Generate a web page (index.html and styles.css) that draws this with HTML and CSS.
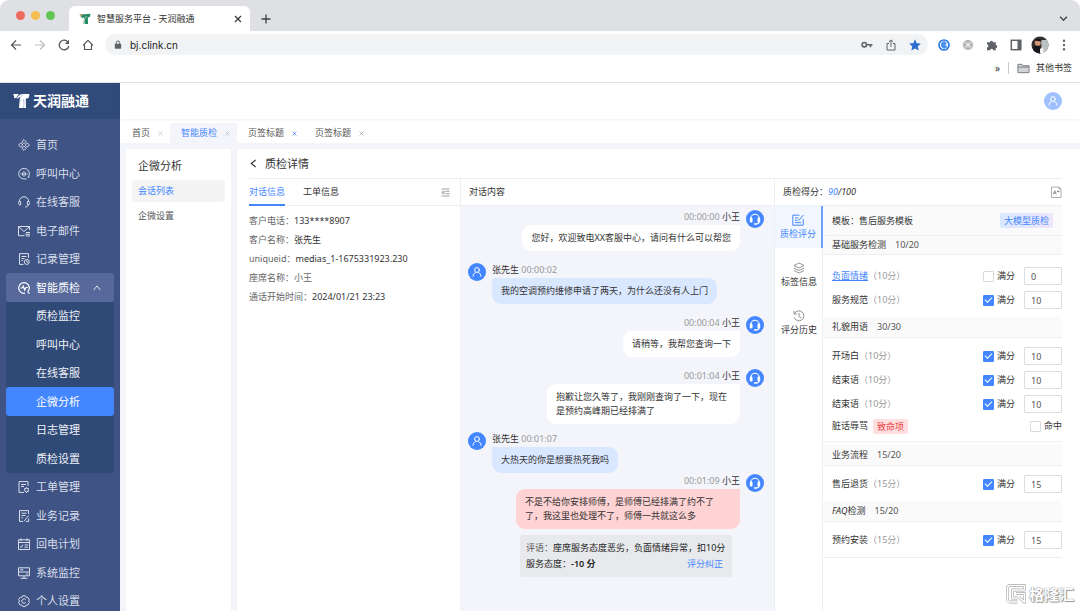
FILE: index.html
```html
<!DOCTYPE html>
<html lang="zh-CN">
<head>
<meta charset="utf-8">
<title>智慧服务平台 - 天润融通</title>
<link rel="stylesheet" href="styles.css">
</head>
<body>
<svg class="defs" aria-hidden="true">
  <symbol id="user" viewBox="0 0 18 18"><g fill="none" stroke="#fff" stroke-width="1" stroke-linecap="round"><circle cx="9" cy="7" r="2.400"/><path d="M5 13.300c.2-1.800 1-3 2.400-3.800M13 13.300c-.2-1.800-1-3-2.400-3.800"/></g></symbol>
  <symbol id="agent" viewBox="0 0 18 18"><path d="M4.800 8.500a4.200 4.200 0 0 1 8.400 0v3c0 1.500-1 2.300-2.700 2.500" fill="none" stroke="#fff" stroke-width="1.100"/><rect x="3.800" y="7.500" width="2.700" height="5" rx="1.200" fill="#fff"/><rect x="11.500" y="7.500" width="2.700" height="5" rx="1.200" fill="#fff"/><rect x="7.800" y="13.200" width="3.400" height="1.500" rx=".7" fill="#fff"/></symbol>
  <symbol id="close" viewBox="0 0 8 8"><path d="M1 1l6 6M7 1l-6 6" fill="none" stroke="currentColor" stroke-width="1.200"/></symbol>
</svg>

<header class="browser">
  <div class="tabstrip">
    <div class="lights"><i class="red"></i><i class="yellow"></i><i class="green"></i></div>
    <div class="browser-tab">
      <svg class="fav" viewBox="0 0 12 12"><path d="M.5 1h4L3.800 3.800 1.500 4z" fill="#b9a978"/><path d="M3.500 1.500 11.500.8 10.800 4l-2 .2L9 11H4.500L5 4.500 2 5z" fill="#1f8a63"/><path d="M5.500 11c-.5-3 0-6 2-8" fill="none" stroke="#d8e8df" stroke-width=".8"/></svg>
      <span>智慧服务平台 - 天润融通</span>
      <button class="plain" aria-label="关闭标签页"><svg class="s7" viewBox="0 0 8 8"><path d="M1 1l6 6M7 1 1 7" stroke="#3c4043" stroke-width="1.400"/></svg></button>
    </div>
    <button class="plain new-tab" aria-label="新标签页"><svg class="s10" viewBox="0 0 10 10"><path d="M5 .5v9M.5 5h9" stroke="#3c4043" stroke-width="1.300"/></svg></button>
    <svg class="s9 chev" viewBox="0 0 8 8"><path d="M1 2.500l3 3 3-3" fill="none" stroke="#45484c" stroke-width="1.300"/></svg>
  </div>
  <div class="toolbar">
    <div class="nav-buttons">
      <button class="plain" aria-label="后退"><svg class="s12" viewBox="0 0 12 12"><path d="M11 6H1.500M6 1.500 1.500 6 6 10.500" fill="none" stroke="#55585c" stroke-width="1.200"/></svg></button>
      <button class="plain" aria-label="前进"><svg class="s12" viewBox="0 0 12 12"><path d="M1 6h9.500M6 1.500 10.500 6 6 10.500" fill="none" stroke="#bbbdc0" stroke-width="1.200"/></svg></button>
      <button class="plain" aria-label="刷新"><svg class="s12" viewBox="0 0 12 12"><path d="M10.200 3.500A4.800 4.800 0 1 0 10.800 7" fill="none" stroke="#55585c" stroke-width="1.300"/><path d="M11 .8V5H6.800z" fill="#55585c"/></svg></button>
      <button class="plain" aria-label="主页"><svg class="s12" viewBox="0 0 12 12"><path d="M1 6.300 6 1.300l5 5M2.500 5.500v5h7v-5" fill="none" stroke="#55585c" stroke-width="1.200"/></svg></button>
    </div>
    <div class="address">
      <svg class="lock" viewBox="0 0 8 10"><rect x=".8" y="3.800" width="6.400" height="5" rx=".8" fill="#5f6368"/><path d="M2.300 4V2.700a1.700 1.700 0 0 1 3.400 0V4" fill="none" stroke="#5f6368"/></svg>
      <input class="url" type="text" value="bj.clink.cn" aria-label="网址">
      <svg class="s12" viewBox="0 0 12 12"><circle cx="3.300" cy="5.700" r="2.200" fill="none" stroke="#5f6368" stroke-width="1.600"/><path d="M5.500 5.700h6M9.500 5.700V8.200" stroke="#5f6368" stroke-width="1.600"/></svg>
      <svg class="s12" viewBox="0 0 12 12"><path d="M4 4.500H2v6.500h8V4.500H8M6 7.800V1M3.800 3 6 .9 8.200 3" fill="none" stroke="#5f6368"/></svg>
      <svg class="s12" viewBox="0 0 12 12"><path d="M6 .3l1.700 3.900 4.200.4-3.200 2.800 1 4.200L6 9.400l-3.700 2.200 1-4.200L.1 4.600l4.200-.4z" fill="#2b6bd0"/></svg>
    </div>
    <div class="extensions">
      <svg class="s12" viewBox="0 0 12 12"><circle cx="6" cy="6" r="5" fill="#fff" stroke="#2f7be8" stroke-width="1.700"/><path d="M6.500 2C4 2.500 2.800 4 3 6.500c.3 2 1.800 3 3.600 3.200L9.600 8 8.500 6.500H6.800L9 4.500z" fill="#4c91ee"/></svg>
      <svg class="s12" viewBox="0 0 12 12"><circle cx="6" cy="6" r="5" fill="#a9abad"/><path d="M4.200 1.800v8.400M7.800 1.800v8.400M1.800 4.200h8.400M1.800 7.800h8.400" stroke="#e5e5e6" stroke-width=".8"/><circle cx="6" cy="6" r="1.200" fill="#f4f4f4"/></svg>
      <svg class="s12" viewBox="0 0 12 12"><path d="M1 3.200h3a1.500 1.500 0 1 1 3 0h2.800V6a1.500 1.500 0 1 1 0 3v2.300H7.200a1.500 1.500 0 1 0-3 0H1V8.400a1.400 1.400 0 1 0 0-2.800z" fill="#5f6368"/></svg>
      <svg class="s12" viewBox="0 0 12 12"><rect x="1.300" y="1.300" width="9.400" height="9.400" fill="none" stroke="#5f6368" stroke-width="1.500"/><path d="M7.500 1h3.700v10H7.500z" fill="#5f6368"/></svg>
      <svg class="face" viewBox="0 0 18 18"><clipPath id="round"><circle cx="9" cy="9" r="8.500"/></clipPath><g clip-path="url(#round)"><path d="M0 0h18v18H0z" fill="#34302f"/><path d="M10 4l8 0v14h-7z" fill="#b9c1c2"/><circle cx="6.800" cy="6.800" r="3" fill="#d49a78"/><path d="M2 11c2-1 4-1.500 7 0l1 7H2z" fill="#15171a"/><path d="M9 13l3-2 1 7H9z" fill="#f5f5f2"/><path d="M4 4.500c2-3 6-2 7 1L6 5z" fill="#181515"/></g></svg>
      <svg class="s12" viewBox="0 0 12 12"><g fill="#5f6368"><circle cx="6" cy="1.800" r="1.200"/><circle cx="6" cy="6" r="1.200"/><circle cx="6" cy="10.200" r="1.200"/></g></svg>
    </div>
  </div>
  <div class="bookmarks">
    <span class="more">»</span><span class="rule"></span>
    <svg class="folder" viewBox="0 0 14 11"><path d="M1 1h4.500l1 1.500H13V10H1z" fill="#d2d4d6" stroke="#75787c"/><path d="M1 4h12" stroke="#75787c"/></svg>
    <span>其他书签</span>
  </div>
</header>

<div class="app">
  <aside class="sidebar">
    <div class="brand">
      <svg class="logo" viewBox="0 0 17 16"><path d="M.3 1h5.500L4 3.500 3.300 5 1.500 5.200z" fill="#fff"/><path d="M3.500 6C5 2.500 7 1.200 10 1h6.500l-1 4.300-2.700.3L13 15H6l.7-8.500L7 4z" fill="#fff"/><path d="M9.800 1.500C7.500 3.500 6.500 6 6.800 9M10.500 6c.6 3 .6 6 0 9" fill="none" stroke="#7184a8" stroke-width=".5"/></svg>
      <span>天润融通</span>
    </div>
    <nav>
      <ul class="menu">
        <li><a href="#"><svg viewBox="0 0 12 12"><path d="M6 .6 8.100 2.700 6 4.800 3.900 2.700zM6 7.200l2.100 2.100L6 11.400 3.900 9.300zM2.700 3.900 4.800 6 2.700 8.100.6 6zM9.300 3.900 11.400 6 9.300 8.100 7.200 6z"/></svg>首页</a></li>
        <li><a href="#"><svg viewBox="0 0 12 12"><path d="M8.500 11H6A5.300 5.300 0 1 1 11.300 6c0 1.500-.3 2.500-1 3.300M4.500 4.500v3M6 3.200v5.600M7.500 4.500v3M3 5.500v1M9 5.500v1M9.700 9.200h1.600"/></svg>呼叫中心</a></li>
        <li><a href="#"><svg viewBox="0 0 12 12"><path d="M1.300 5.500A4.700 4.700 0 0 1 10.700 5.500M10.700 8.500c-.4 1.600-1.700 2.500-3.700 2.500M1 5.500h1.600V9H1.500C.3 8 .3 6.500 1 5.500zM11 5.500H9.400V9h1.100c1.200-1 1.200-2.500.5-3.500z"/></svg>在线客服</a></li>
        <li><a href="#"><svg viewBox="0 0 12 12"><path d="M11.500 5V1.500H.5v9.200h6M.5 1.500 6 6.500l5.500-5M8 7.500h4M7 9.200h5M8 10.900h4"/></svg>电子邮件</a></li>
        <li><a href="#"><svg viewBox="0 0 12 12"><path d="M10.500 5V.6h-9v10.800h4M3.500 3.500h5M3.500 5.500h3M3.500 7.500h1.500"/><circle cx="8.800" cy="8.900" r="2.500"/><path d="M8.800 7.300V9h1.500"/></svg>记录管理</a></li>
        <li><a href="#" class="open"><svg viewBox="0 0 12 12"><path d="M9.700 9.800A5.300 5.300 0 1 0 7 11.200M9.700 9.800l1.800 1.800M2.500 6H4l1.200-2 1.500 4L8 5.500h1.700" stroke-width="1.200"/></svg>智能质检<svg class="caret" viewBox="0 0 12 12"><path d="M2 8.500l4-5 4 5"/></svg></a></li>
      </ul>
      <ul class="submenu">
        <li><a href="#">质检监控</a></li>
        <li><a href="#">呼叫中心</a></li>
        <li><a href="#">在线客服</a></li>
        <li><a href="#" class="current">企微分析</a></li>
        <li><a href="#">日志管理</a></li>
        <li><a href="#">质检设置</a></li>
      </ul>
      <ul class="menu">
        <li><a href="#"><svg viewBox="0 0 12 12"><path d="M10 5V.6H1v10.800h5M3 3.500h5M3 5.500h3"/><circle cx="8.500" cy="9" r="1.900"/><path d="M8.500 6.200v1M8.500 11v1M6 7.600l.9.500M10.100 9.900l.9.500M11 7.600l-.9.500"/></svg>工单管理</a></li>
        <li><a href="#"><svg viewBox="0 0 12 12"><path d="M10.500 4V.6h-9v10.800H5M3.500 3.200h5M3.500 5.500h4M3.500 7.800H5M6 11.200l4.700-5.700M8 11.400h2.700V8.500"/></svg>业务记录</a></li>
        <li><a href="#"><svg viewBox="0 0 12 12"><path d="M.5 1.800h11v9.700H.5zM.5 4.500h11M3 .3v2.800M9 .3v2.800M6.500 7H10M6.500 9.200H10M2 8.500l1.200 1 1.800-2.800"/></svg>回电计划</a></li>
        <li><a href="#"><svg viewBox="0 0 12 12"><path d="M.5.800h11v8H.5zM.5 5h11M6 9v2.300M2.500 11.300h7M2 3h1.500l.7-1L5 3.500M8 7h2"/></svg>系统监控</a></li>
        <li><a href="#"><svg viewBox="0 0 12 12"><path d="M4.500 .8h3l.7 1.500 1.700.1 1.500 2.600-.9 1 .9 1.500-1.500 2.500-1.700.1-.7 1.300h-3l-.7-1.300-1.700-.1L.6 7.500 1.500 6 .6 4.500l1.500-2.100 1.700-.1zM7.800 4.800A2.200 2.200 0 1 0 7.800 7.300"/></svg>个人设置</a></li>
      </ul>
    </nav>
  </aside>

  <div class="workspace">
    <div class="topbar"><svg class="account" viewBox="0 0 18 18"><circle cx="9" cy="9" r="9" fill="#9ec0ff"/><use href="#user"/></svg></div>
    <div class="page-tabs">
      <div class="page-tab"><span>首页</span><svg class="x"><use href="#close"/></svg></div>
      <div class="page-tab selected"><span>智能质检</span><svg class="x"><use href="#close"/></svg></div>
      <div class="page-tab"><span>页签标题</span><svg class="x blue"><use href="#close"/></svg></div>
      <div class="page-tab"><span>页签标题</span><svg class="x dark"><use href="#close"/></svg></div>
    </div>
    <div class="panels">
      <nav class="side-panel">
        <h2>企微分析</h2>
        <a href="#" class="chosen">会话列表</a>
        <a href="#">企微设置</a>
      </nav>
      <main class="detail">
        <div class="title"><svg class="s9" viewBox="0 0 8 8"><path d="M6 .8 2 4l4 3.200" fill="none" stroke="#333"/></svg><h1>质检详情</h1></div>
        <div class="columns">
          <section class="info">
            <div class="col-head tabs">
              <button class="plain active">对话信息</button><button class="plain">工单信息</button>
              <svg class="s9 push" viewBox="0 0 9 9"><path d="M.5 1h8M4.500 3.300h4M4.500 5.700h4M.5 8h8M3 3v3L.8 4.500z" fill="none" stroke="#888" stroke-width=".8"/></svg>
            </div>
            <dl>
              <div><dt>客户电话<span class="mid">：</span></dt><dd>133****8907</dd></div>
              <div><dt>客户名称<span class="mid">：</span></dt><dd>张先生</dd></div>
              <div><dt>uniqueid<span class="mid">：</span></dt><dd>medias_1-1675331923.230</dd></div>
              <div><dt>座席名称<span class="mid">：</span></dt><dd class="soft">小王</dd></div>
              <div><dt>通话开始时间<span class="mid">：</span></dt><dd>2024/01/21 23:23</dd></div>
            </dl>
          </section>

          <section class="chat">
            <div class="col-head">对话内容</div>
            <div class="messages">
              <article class="msg agent"><div><p class="who"><time>00:00:00</time> 小王</p><p class="bubble">您好，欢迎致电XX客服中心，请问有什么可以帮您</p></div><svg class="avatar"><use href="#agent"/></svg></article>
              <article class="msg"><svg class="avatar"><use href="#user"/></svg><div><p class="who">张先生 <time>00:00:02</time></p><p class="bubble">我的空调预约维修申请了两天<span class="mid">，</span>为什么还没有人上门</p></div></article>
              <article class="msg agent"><div><p class="who"><time>00:00:04</time> 小王</p><p class="bubble">请稍等，我帮您查询一下</p></div><svg class="avatar"><use href="#agent"/></svg></article>
              <article class="msg agent long"><div><p class="who"><time>00:01:04</time> 小王</p><p class="bubble">抱歉让您久等了，我刚刚查询了一下，现在<br>是预约高峰期已经排满了</p></div><svg class="avatar"><use href="#agent"/></svg></article>
              <article class="msg near"><svg class="avatar"><use href="#user"/></svg><div><p class="who">张先生 <time>00:01:07</time></p><p class="bubble">大热天的你是想要热死我吗</p></div></article>
              <article class="msg agent flagged"><div><p class="who"><time>00:01:09</time> 小王</p><p class="bubble">不是不给你安排师傅，是师傅已经排满了约不了<br>了，我这里也处理不了，师傅一共就这么多</p></div><svg class="avatar"><use href="#agent"/></svg></article>
              <aside class="remark">
                <p><span class="label">评语：</span>座席服务态度恶劣，负面情绪异常，扣10分</p>
                <p><span>服务态度：<strong>-10 分</strong></span><a href="#">评分纠正</a></p>
              </aside>
            </div>
          </section>

          <section class="score">
            <div class="col-head"><span>质检得分<span class="mid">：</span><em><b>90</b>/100</em></span>
              <svg class="s12 push" viewBox="0 0 12 12"><path d="M1.500 1h7.500l2 2v8.500H1.500zM9 1v2h2" fill="none" stroke="#999" stroke-width=".8"/><path d="M3.300 8.300l1.500-3.600 1.500 3.600M3.800 7.200h2M7 5.500h2.500M8.200 4.500v2" fill="none" stroke="#777" stroke-width=".8"/></svg>
            </div>
            <div class="score-body">
              <div class="score-tabs">
                <button class="plain active"><svg class="s12" viewBox="0 0 12 12"><path d="M7.500 1.200H.8v10h10.400V5M3 4h3.500M3 6.200h2.500M3 8.600h6M6.500 6.700l5-5.700" fill="none" stroke="currentColor"/></svg>质检评分</button>
                <button class="plain"><svg class="s12" viewBox="0 0 12 12"><path d="M6 1l5 2.500L6 6 1 3.500zM1 6l5 2.500L11 6M1 8.500 6 11l5-2.500" fill="none" stroke="#777" stroke-width=".8"/></svg>标签信息</button>
                <button class="plain"><svg class="s12" viewBox="0 0 12 12"><path d="M1.500 3.500A5 5 0 1 1 1.200 7.500M1 1v3h3M6 3v3.500L8.500 8" fill="none" stroke="#777" stroke-width=".8"/></svg>评分历史</button>
              </div>
              <form class="rules">
                <div class="template"><span>模板<span class="mid">：</span>售后服务模板</span><span class="tag model">大模型质检</span></div>
                <fieldset class="first">
                  <h3>基础服务检测<span>10/20</span></h3>
                  <div class="rule-row"><a href="#">负面情绪</a><small>（10分）</small><label><input type="checkbox">满分</label><input type="text" value="0" aria-label="负面情绪得分"></div>
                  <div class="rule-row"><span>服务规范</span><small>（10分）</small><label><input type="checkbox" checked>满分</label><input type="text" value="10" aria-label="服务规范得分"></div>
                </fieldset>
                <fieldset class="ruled">
                  <h3>礼貌用语<span>30/30</span></h3>
                  <div class="rule-row"><span>开场白</span><small>（10分）</small><label><input type="checkbox" checked>满分</label><input type="text" value="10" aria-label="开场白得分"></div>
                  <div class="rule-row"><span>结束语</span><small>（10分）</small><label><input type="checkbox" checked>满分</label><input type="text" value="10" aria-label="结束语得分"></div>
                  <div class="rule-row"><span>结束语</span><small>（10分）</small><label><input type="checkbox" checked>满分</label><input type="text" value="10" aria-label="结束语得分"></div>
                  <div class="rule-row fatal"><span>脏话辱骂</span><span class="tag danger">致命项</span><label><input type="checkbox">命中</label></div>
                </fieldset>
                <fieldset>
                  <h3>业务流程<span>15/20</span></h3>
                  <div class="rule-row"><span>售后退货</span><small>（15分）</small><label><input type="checkbox" checked>满分</label><input type="text" value="15" aria-label="售后退货得分"></div>
                </fieldset>
                <fieldset class="ruled">
                  <h3><i>FAQ</i>检测<span>15/20</span></h3>
                  <div class="rule-row"><span>预约安装</span><small>（15分）</small><label><input type="checkbox" checked>满分</label><input type="text" value="15" aria-label="预约安装得分"></div>
                </fieldset>
              </form>
            </div>
          </section>
        </div>
      </main>
    </div>
  </div>
</div>
<div class="watermark"><svg viewBox="0 0 20 20"><g fill="none" stroke-linejoin="round"><path d="M11.500 18H4a2.500 2.500 0 0 1-2.500-2.500V4A2.500 2.500 0 0 1 4 1.500h14.500V6H6.500v8h5M10 9.500h8.500v9L13 13" stroke="#a8a8a8" stroke-width="2.800"/><path d="M11.500 18H4a2.500 2.500 0 0 1-2.500-2.500V4A2.500 2.500 0 0 1 4 1.500h14.500V6H6.500v8h5M10 9.500h8.500v9L13 13" stroke="#fff" stroke-width="1.600"/></g></svg><span>格隆汇</span></div>
</body>
</html>
```
FILE: styles.css
```css
* { box-sizing: border-box; }
body, p, h1, h2, h3, ul, dl, dd, fieldset { margin: 0; padding: 0; }
body {
  height: 100vh;
  display: flex;
  flex-direction: column;
  overflow: hidden;
  background: #fff;
  color: #333;
  font: 9px/14px "Noto Sans", "Noto Sans CJK SC", sans-serif;
}
ul { list-style: none; }
a { color: inherit; text-decoration: none; }
svg { display: block; flex: none; }
h1, h2, h3 { font-weight: 400; }
fieldset { border: 0; min-width: 0; }
input { font: inherit; color: inherit; }
.plain { border: 0; padding: 0; background: none; font: inherit; color: inherit; }
.defs { position: absolute; width: 0; height: 0; }
.s7 { width: 8px; height: 8px; }
.s9 { width: 9px; height: 9px; }
.s10 { width: 10px; height: 10px; }
.s12 { width: 12px; height: 12px; }
.push { margin-left: auto; }
/* Centred full-width punctuation */
.mid { font-family: "Noto Sans CJK TC", sans-serif; line-height: 1; }

/* Browser chrome */
.browser { flex: none; border-bottom: 1px solid #e1e2e5; }
.tabstrip {
  display: flex;
  align-items: center;
  height: 31px;
  padding: 0 12px 0 16px;
  background: #dee0e4;
  border-radius: 9px 9px 0 0;
}
.lights { display: flex; gap: 6px; width: 53px; }
.lights i { width: 9px; height: 9px; border-radius: 50%; }
.red { background: #ed6a5e; }
.yellow { background: #f4bf4f; }
.green { background: #61c554; }
.browser-tab {
  display: flex;
  align-items: center;
  gap: 6px;
  align-self: flex-end;
  width: 181px;
  height: 25px;
  padding: 0 8px 0 10px;
  background: #fff;
  border-radius: 6px 6px 0 0;
}
.browser-tab button { margin-left: auto; }
.fav { width: 12px; height: 12px; }
.new-tab { margin-left: 11px; padding-top: 6px; }
.chev { margin: 6px 0 0 auto; }
.toolbar { display: flex; align-items: center; height: 27px; padding: 0 10px; }
.nav-buttons { display: flex; gap: 12px; margin-right: 11px; }
.address {
  display: flex;
  align-items: center;
  gap: 12px;
  flex: 1;
  height: 21px;
  padding: 0 7px 0 9px;
  background: #f1f3f4;
  border-radius: 11px;
}
.lock { width: 8px; height: 10px; }
.url {
  flex: 1;
  min-width: 0;
  margin-left: -4px;
  padding: 0;
  border: 0;
  background: none;
  color: #202124;
  font: 10px/14px Inter, sans-serif;
}
.extensions { display: flex; align-items: center; gap: 12px; margin-left: 10px; }
.face { width: 18px; height: 18px; margin: 0 -3px; }
.bookmarks {
  display: flex;
  align-items: center;
  justify-content: flex-end;
  gap: 8px;
  height: 24px;
  padding: 0 8px 4px;
}
.more { font-size: 10px; }
.rule { width: 1px; height: 12px; background: #c9cbcf; }
.folder { width: 13px; height: 11px; margin-right: -2px; }

/* Main navigation */
.app { display: flex; flex: 1; min-height: 0; }
.sidebar { flex: none; width: 120px; background: #3f5485; color: #d9deea; font-size: 10px; overflow: hidden; }
.brand {
  display: flex;
  align-items: center;
  gap: 3px;
  height: 36px;
  padding-left: 13px;
  margin-bottom: 12px;
  background: #304a7a;
  color: #fff;
  font-size: 14px;
  font-weight: 700;
}
.logo { width: 17px; height: 16px; }
.sidebar nav { padding: 0 6px; font-size: 11px; }
.sidebar li a { display: flex; align-items: center; gap: 6px; height: 28px; padding: 0 12px; border-radius: 3px; }
.sidebar li:nth-child(even) a { height: 29px; }
.sidebar li svg { width: 12px; height: 12px; fill: none; stroke: currentColor; stroke-width: 1; }
.sidebar .open { background: #56699a; color: #fff; }
.sidebar li .caret { width: 10px; height: 10px; margin-left: auto; }
.submenu { background: #304a78; color: #eef1f6; border-radius: 0 0 3px 3px; }
.sidebar .submenu a { padding-left: 30px; }
.submenu .current { background: #4386ff; color: #fff; }

/* Workspace */
.workspace { display: flex; flex-direction: column; flex: 1; min-width: 0; background: #f4f5fa; }
.topbar {
  display: flex;
  align-items: center;
  justify-content: flex-end;
  height: 36px;
  padding-right: 18px;
  background: #fff;
  box-shadow: 0 1px 3px #0000000f;
  z-index: 1;
}
.account { width: 18px; height: 18px; }
.page-tabs { display: flex; align-items: flex-end; height: 24px; padding-left: 1px; background: #fff; color: #555; }
.page-tab { display: flex; align-items: center; gap: 8px; height: 20px; padding: 0 7px 0 11px; border-radius: 3px 3px 0 0; }
.selected { background: #f4f5fa; color: #4386ff; }
.x { width: 5px; height: 5px; overflow: visible; color: #bbb; }
.x.blue { color: #4386ff; }
.x.dark { color: #999; }
.panels { display: flex; gap: 6px; flex: 1; min-height: 0; padding: 6px 0 0 6px; }
.side-panel { flex: none; width: 105px; padding: 6px; background: #fff; color: #555; }
.side-panel h2 { padding: 0 6px; font-size: 11px; line-height: 22px; color: #333; margin-bottom: 3px; }
.side-panel a { display: block; padding: 0 6px; margin-bottom: 3px; line-height: 22px; border-radius: 3px; }
.side-panel .chosen { background: #f4f4f4; color: #4386ff; }

/* Detail panel */
.detail { display: flex; flex-direction: column; flex: 1; min-width: 0; padding: 0 18px 0 12px; background: #fff; }
.title { display: flex; align-items: center; gap: 7px; height: 30px; border-bottom: 1px solid #eeeff2; }
.title h1 { font-size: 11px; }
.columns { display: grid; grid-template-columns: 211fr 314fr 288fr; flex: 1; min-height: 0; }
.columns > section { display: flex; flex-direction: column; min-width: 0; }
.col-head {
  display: flex;
  align-items: center;
  flex: none;
  height: 27px;
  padding: 0 8px;
  border-bottom: 1px solid #eeeff2;
  border-left: 1px solid #eeeff2;
}
.tabs { gap: 18px; padding: 0 10px 0 0; border-left: 0; }
.tabs button { height: 27px; border-bottom: 2px solid transparent; padding-top: 1px; }
.tabs .active { color: #4386ff; border-color: #4386ff; }
.info dl { display: grid; gap: 5px; padding-top: 8px; }
.info dl div { display: flex; }
dt, .soft { color: #666; }

/* Conversation */
.messages { flex: 1; padding: 3px 10px 0 8px; background: #f4f5fa; }
.msg { display: flex; gap: 6px; margin-bottom: 11px; }
.msg.agent { justify-content: flex-end; }
.msg:has(+ .near) { margin-bottom: 7px; }
.msg.near, .msg.flagged { margin-bottom: 0; }
.avatar { width: 18px; height: 18px; margin-top: 1px; border-radius: 50%; background: #4386ff; }
.who { line-height: 16px; }
time { color: #999; }
.agent .who { text-align: right; }
.bubble { width: fit-content; padding: 6px 9px; border-radius: 0 9px 9px; background: #d9e7ff; }
.agent .bubble { margin-left: auto; border-radius: 9px 0 9px 9px; background: #fff; }
.long .bubble { min-width: 193px; }
.flagged .bubble { min-width: 224px; background: #ffd2d3; }
.remark { width: 212px; margin: 6px 32px 0 auto; padding: 5px 9px 5px 6px; border-radius: 2px; background: #e8e9ec; }
.remark p { display: flex; line-height: 16px; color: #222; white-space: nowrap; }
.remark .label { color: #555; }
.remark strong { font-weight: 600; }
.remark a { margin-left: auto; color: #4386ff; }

/* Scoring */
.score em b { font-weight: 400; color: #4386ff; }
.score .col-head { padding-right: 0; }
.score-body { display: flex; flex: 1; min-height: 0; border-left: 1px solid #eeeff2; }
.score-tabs { display: flex; flex-direction: column; gap: 6px; flex: none; width: 48px; border-right: 1px solid #eeeff2; }
.score-tabs button {
  display: flex;
  flex-direction: column;
  align-items: center;
  justify-content: center;
  gap: 1px;
  height: 42px;
  margin-right: -1px;
}
.score-tabs .active { background: #f2f7ff; color: #4386ff; border-right: 2px solid #6ea2ff; }
.rules { flex: 1; min-width: 0; }
.template {
  display: flex;
  align-items: center;
  justify-content: space-between;
  height: 30px;
  padding: 0 9px;
  background: #fafafa;
  border-bottom: 1px solid #eeeff2;
}
.tag { padding: 0 4px; border-radius: 2px; line-height: 15px; }
.model { background: linear-gradient(90deg, #d9e8ff, #efe5fc); color: #4386ff; }
.danger { margin-left: 5px; background: #ffdfe0; color: #f04040; }
.rules h3 {
  height: 21px;
  margin-bottom: 6px;
  padding-left: 9px;
  font-size: 9px;
  line-height: 20px;
  background: #fafafa;
  border-bottom: 1px solid #eeeff2;
}
.rules h3 span { margin-left: 9px; color: #555; }
.rules fieldset { padding-bottom: 5px; }
.rules .first h3 { height: 19px; line-height: 18px; margin-bottom: 9px; }
.rules .ruled { border-bottom: 1px solid #eeeff2; margin-bottom: 3px; }
.rule-row { display: flex; align-items: center; height: 24px; padding-left: 9px; }
.rule-row.fatal { height: 20px; }
.rule-row small { font-size: 9px; color: #999; }
.rule-row a { color: #4386ff; text-decoration: underline; }
.rule-row label { display: flex; align-items: center; gap: 3px; margin-left: auto; }
.rule-row input[type="text"] {
  width: 38px;
  height: 18px;
  margin-left: 9px;
  padding: 0 6px;
  border: 1px solid #dcdddf;
  border-radius: 1px;
  background: #fff;
  color: #555;
}
.rule-row input[type="checkbox"] {
  appearance: none;
  display: grid;
  place-items: center;
  width: 11px;
  height: 11px;
  margin: 0;
  border: 1px solid #d9dadd;
  border-radius: 1px;
  background: #fff;
}
.rule-row input[type="checkbox"]:checked { background: #4386ff; border-color: #4386ff; }
.rule-row input[type="checkbox"]:checked::after {
  content: "";
  width: 6px;
  height: 3px;
  margin-bottom: 2px;
  border: solid #fff;
  border-width: 0 0 1px 1px;
  transform: rotate(-45deg);
}

.watermark {
  position: absolute;
  right: 6px;
  bottom: 6px;
  display: flex;
  align-items: center;
  gap: 3px;
  color: #fff;
  font-size: 15px;
  font-weight: 700;
  line-height: 22px;
  text-shadow: 0 0 1px #888, 0 0 1px #888, 1px 1px 1px #999;
}
.watermark svg { width: 20px; height: 20px; }
```
